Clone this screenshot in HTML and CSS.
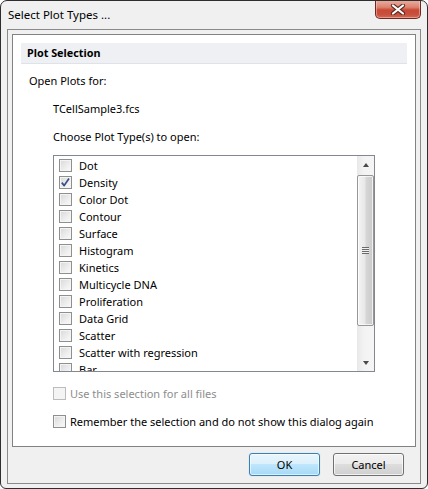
FILE: index.html
```html
<!DOCTYPE html>
<html>
<head>
<meta charset="utf-8">
<link rel="stylesheet" href="styles.css">
</head>
<body>
<div class="window">
  <div class="titlebar">
    <div class="title">Select Plot Types ...</div>
    <div class="close">
      <svg width="16" height="11" viewBox="0 0 16 11">
        <path d="M3 1.5 L13 9.5 M13 1.5 L3 9.5" stroke="#5b2a22" stroke-width="4.2" stroke-linecap="round"/>
        <path d="M3 1.5 L13 9.5 M13 1.5 L3 9.5" stroke="#ffffff" stroke-width="2.2" stroke-linecap="round"/>
      </svg>
    </div>
  </div>
  <div class="client">
    <div class="panel">
      <div class="band">Plot Selection</div>
      <div class="label open">Open Plots for:</div>
      <div class="label file">TCellSample3.fcs</div>
      <div class="label choose">Choose Plot Type(s) to open:</div>
      <div class="listbox">
        <div class="items">
          <div class="item"><span class="cb"></span><span>Dot</span></div>
          <div class="item"><span class="cb checked"><svg width="11" height="11" viewBox="0 0 11 11"><path d="M1.8 5.6 L4.2 8.6 L9 1.6" fill="none" stroke="#3b4f8a" stroke-width="1.7" stroke-linejoin="round"/></svg></span><span>Density</span></div>
          <div class="item"><span class="cb"></span><span>Color Dot</span></div>
          <div class="item"><span class="cb"></span><span>Contour</span></div>
          <div class="item"><span class="cb"></span><span>Surface</span></div>
          <div class="item"><span class="cb"></span><span>Histogram</span></div>
          <div class="item"><span class="cb"></span><span>Kinetics</span></div>
          <div class="item"><span class="cb"></span><span>Multicycle DNA</span></div>
          <div class="item"><span class="cb"></span><span>Proliferation</span></div>
          <div class="item"><span class="cb"></span><span>Data Grid</span></div>
          <div class="item"><span class="cb"></span><span>Scatter</span></div>
          <div class="item"><span class="cb"></span><span>Scatter with regression</span></div>
          <div class="item"><span class="cb"></span><span>Bar</span></div>
        </div>
        <div class="scrollbar">
          <div class="sbtn"><span class="arrow up"></span></div>
          <div class="thumb"><span class="grip"></span></div>
          <div class="spacer"></div>
          <div class="sbtn"><span class="arrow down"></span></div>
        </div>
      </div>
      <div class="opt disabled"><span class="cb dis"></span><span>Use this selection for all files</span></div>
      <div class="opt remember"><span class="cb"></span><span>Remember the selection and do not show this dialog again</span></div>
    </div>
    <div class="buttons">
      <div class="btn ok">OK</div>
      <div class="btn cancel">Cancel</div>
    </div>
  </div>
</div>
</body>
</html>
```
FILE: styles.css
```css
html, body {
  margin: 0;
  padding: 0;
  background: #ffffff;
}
body {
  font-family: "Segoe UI", "Noto Sans", sans-serif;
  font-size: 11px;
  color: #000;
}
.window {
  width: 428px;
  height: 489px;
  box-sizing: border-box;
  border: 1px solid #2e2e2e;
  border-radius: 7px 7px 6px 6px;
  background: #f0f0f0;
  display: flex;
  flex-direction: column;
  overflow: hidden;
}
.titlebar {
  height: 28px;
  flex: none;
  display: flex;
  justify-content: space-between;
  align-items: flex-start;
}
.title {
  padding: 6px 0 0 7px;
  line-height: 16px;
  font-size: 11.5px;
}
.close {
  width: 44px;
  height: 18px;
  margin: -1px 6px 0 0;
  border: 1px solid #6a2a22;
  border-top: none;
  border-radius: 0 0 5px 5px;
  background: linear-gradient(#eab0a2 0%, #dc8471 40%, #c94a36 55%, #c8503c 80%, #d46a55 100%);
  box-shadow: inset 0 0 0 1px rgba(255,220,210,0.45);
  display: flex;
  align-items: center;
  justify-content: center;
}
.close svg { display: block; margin-top: 1px; }
.client {
  flex: 1;
  margin: 0 6px 4px 6px;
  border: 1px solid #8a8a8a;
  background: #f0f0f0;
  display: flex;
  flex-direction: column;
  padding: 4px 4px 0 4px;
}
.panel {
  flex: 1;
  border: 1px solid #828282;
  background: #ffffff;
  padding: 8px 8px 0 8px;
}
.band {
  background: #eff0f4;
  border-bottom: 1px solid #dfe2e8;
  height: 20px;
  line-height: 20px;
  padding-left: 6px;
  font-weight: bold;
  font-size: 10.8px;
}
.label {
  line-height: 16px;
}
.open { margin: 9px 0 0 8px; }
.file { margin: 12px 0 0 32px; }
.choose { margin: 12px 0 0 32px; }
.listbox {
  margin: 10px 0 0 32px;
  width: 322px;
  height: 217px;
  box-sizing: border-box;
  border: 1px solid #828790;
  display: flex;
}
.items {
  flex: 1;
  overflow: hidden;
  padding-top: 1px;
}
.item {
  height: 17px;
  display: flex;
  align-items: center;
  padding-left: 5px;
}
.item .cb { margin-right: 7px; }
.cb {
  width: 13px;
  height: 13px;
  box-sizing: border-box;
  border: 1px solid #8e8f8f;
  background: linear-gradient(135deg, #d8d8d8 0%, #eeeeee 60%, #fafafa 100%);
  box-shadow: inset 0 0 0 1px #f4f4f4;
  flex: none;
  display: flex;
  align-items: center;
  justify-content: center;
}
.cb svg { display: block; }
.cb.dis {
  border-color: #bcbcbc;
  background: #f4f4f4;
  box-shadow: none;
}
.scrollbar {
  width: 17px;
  flex: none;
  background: linear-gradient(90deg, #e8e8e8, #f3f3f3 40%, #f5f5f5);
  display: flex;
  flex-direction: column;
}
.sbtn {
  height: 17px;
  flex: none;
  display: flex;
  align-items: center;
  justify-content: center;
}
.arrow {
  width: 0;
  height: 0;
  border-left: 3.5px solid transparent;
  border-right: 3.5px solid transparent;
}
.arrow.up { border-bottom: 4px solid #4a4a4a; }
.arrow.down { border-top: 4px solid #4a4a4a; }
.thumb {
  margin: 2px 0 0 0;
  height: 151px;
  box-sizing: border-box;
  border: 1px solid #979797;
  border-radius: 2px;
  background: linear-gradient(90deg, #f4f4f4 0%, #e8e8e8 45%, #d6d6d6 55%, #cbcbcb 100%);
  box-shadow: inset 0 0 0 1px rgba(255,255,255,0.7);
  display: flex;
  align-items: center;
  justify-content: center;
}
.grip {
  width: 7px;
  height: 7px;
  background: repeating-linear-gradient(180deg, #6a6a6a 0, #6a6a6a 1px, #f0f0f0 1px, #f0f0f0 2px);
}
.spacer { flex: 1; }
.opt {
  display: flex;
  align-items: center;
  height: 13px;
  margin-left: 32px;
}
.opt .cb { margin-right: 4px; }
.opt.disabled { margin-top: 15px; color: #8d8d8d; }
.opt.remember { margin-top: 15px; }
.buttons {
  display: flex;
  justify-content: flex-end;
  gap: 13px;
  padding: 6px 12px 7px 0;
}
.btn {
  width: 71px;
  height: 23px;
  box-sizing: border-box;
  border-radius: 3px;
  display: flex;
  align-items: center;
  justify-content: center;
}
.ok {
  border: 1px solid #3c7fb1;
  background: linear-gradient(#eaf6fd 0%, #d9f0fc 50%, #bee6fd 50%, #a7d9f5 100%);
  box-shadow: inset 0 0 0 1px rgba(255,255,255,0.6), 0 0 1px #7fc8f0;
}
.cancel {
  border: 1px solid #707070;
  background: linear-gradient(#f2f2f2 0%, #ebebeb 50%, #dddddd 50%, #cfcfcf 100%);
  box-shadow: inset 0 0 0 1px rgba(255,255,255,0.7);
}
```
